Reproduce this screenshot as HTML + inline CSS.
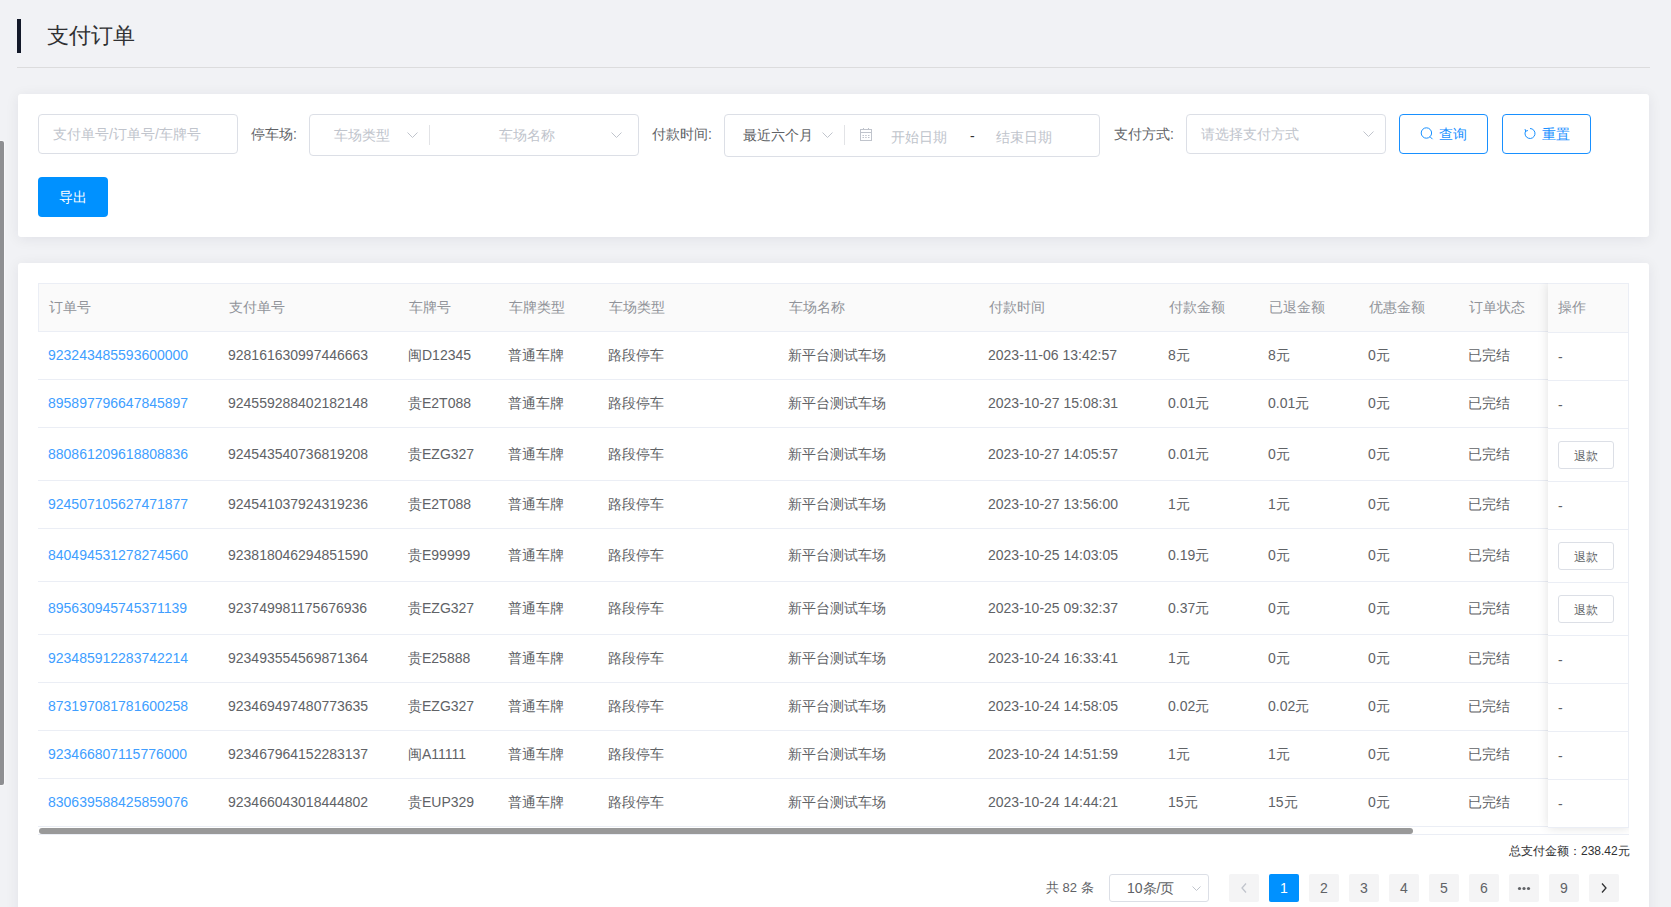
<!DOCTYPE html>
<html><head><meta charset="utf-8">
<style>
*{box-sizing:border-box;margin:0;padding:0}
html,body{width:1671px;height:907px;overflow:hidden}
body{background:#f1f2f5;font-family:"Liberation Sans",sans-serif;color:#606266;position:relative;font-size:14px}
.abs{position:absolute}
.vscroll{position:absolute;left:0;top:141px;width:4px;height:644px;background:#8e8f92;border-radius:0 2px 2px 0;box-shadow:0 0 1px 1px rgba(255,255,255,0.55)}
.tbar{position:absolute;left:17px;top:19px;width:4px;height:34px;background:#131929}
.title{position:absolute;left:47px;top:21px;font-size:22px;line-height:30px;color:#303133;white-space:nowrap}
.hr{position:absolute;left:17px;top:67px;width:1633px;height:1px;background:#dcdcdd}
.card{position:absolute;left:18px;width:1631px;background:#fff;border-radius:3px;box-shadow:0 2px 14px rgba(0,10,50,0.075)}
.inp{position:absolute;border:1px solid #dcdfe6;border-radius:4px;background:#fff}
.ph{position:absolute;color:#c0c4cc;white-space:nowrap;font-size:14px;line-height:20px}
.lbl{position:absolute;color:#606266;white-space:nowrap;font-size:14px;line-height:20px}
.chev{position:absolute;width:11px;height:6px}
.vdiv{position:absolute;width:1px;background:#e2e3e6}
.obtn{position:absolute;border:1px solid #1890ff;border-radius:4px;background:#fff;color:#1890ff;font-size:14px;line-height:20px}
.pbtn{position:absolute;background:#0091ff;border-radius:4px;color:#fff;font-size:14px;line-height:20px}
/* table */
.table{position:absolute;left:38px;top:283px;width:1591px;height:552px;overflow:hidden}
.thead{position:absolute;left:0;top:0;width:1591px;height:49px;background:#fafafa;border-top:1px solid #ebeef5;border-bottom:1px solid #ebeef5;border-left:1px solid #ebeef5}

.thead .c{position:absolute;top:0;height:47px;line-height:47px;padding-left:10px;color:#909399;white-space:nowrap}
.tbody{position:absolute;left:0;top:49px;width:1591px}
.row{position:absolute;left:0;width:1591px;border-bottom:1px solid #ebeef5;box-sizing:content-box}
.row .c{position:absolute;top:0;height:100%;display:flex;align-items:center;padding-left:10px;white-space:nowrap;color:#606266}
.row .c.link{color:#409eff}
.row .a{position:relative;top:-1px}
.row.tall .c{padding-top:2px}
.fixed{position:absolute;left:1510px;top:0;width:81px;height:545px;background:#fff;box-shadow:0 0 10px rgba(0,0,0,0.12)}
.fhead{position:absolute;left:0;top:0;width:81px;height:50px;background:#fafafa;border-top:1px solid #ebeef5;border-bottom:1px solid #ebeef5;border-right:1px solid #ebeef5;padding-left:10px;line-height:46px;color:#909399}
.fbody{position:absolute;left:0;top:50px;width:81px}
.frow{position:absolute;left:0;width:81px;border-bottom:1px solid #ebeef5;border-right:1px solid #ebeef5;box-sizing:border-box;display:flex;align-items:center;padding-left:10px}

.dash{color:#606266;font-size:14px}
.rbtn{display:inline-block;width:56px;height:28px;border:1px solid #dcdfe6;border-radius:3px;font-size:12px;line-height:26px;padding-top:1px;text-align:center;color:#606266;background:#fff}
.hscroll{position:absolute;left:1px;top:545px;width:1374px;height:6px;background:#999;border-radius:3px}
.tbot{position:absolute;left:0;top:551px;width:1591px;height:1px;background:#ebeef5}
/* pagination */
.pg{position:absolute;top:874px;width:30px;height:28px;background:#f4f4f5;border-radius:2px;font-size:14px;line-height:28px;text-align:center;color:#606266}
.pg.act{background:#0091ff;color:#fff}
</style></head><body>
<div class="vscroll"></div>
<div class="tbar"></div>
<div class="title">支付订单</div>
<div class="hr"></div>

<div class="card" style="top:94px;height:143px"></div>
<div class="card" style="top:263px;height:700px"></div>

<!-- filter row -->
<div class="inp" style="left:38px;top:114px;width:200px;height:40px"></div>
<div class="ph" style="left:53px;top:124px">支付单号/订单号/车牌号</div>

<div class="lbl" style="left:251px;top:124px">停车场:</div>
<div class="inp" style="left:309px;top:114px;width:330px;height:42px"></div>
<div class="ph" style="left:334px;top:125px">车场类型</div>
<svg class="chev" style="left:407px;top:132px" viewBox="0 0 11 6"><path d="M0.5 0.5 L5.5 5.5 L10.5 0.5" fill="none" stroke="#c0c4cc" stroke-width="1"/></svg>
<div class="vdiv" style="left:429px;top:125px;height:20px"></div>
<div class="ph" style="left:499px;top:125px">车场名称</div>
<svg class="chev" style="left:611px;top:132px" viewBox="0 0 11 6"><path d="M0.5 0.5 L5.5 5.5 L10.5 0.5" fill="none" stroke="#c0c4cc" stroke-width="1"/></svg>

<div class="lbl" style="left:652px;top:124px">付款时间:</div>
<div class="inp" style="left:724px;top:114px;width:376px;height:43px"></div>
<div class="lbl" style="left:743px;top:125px">最近六个月</div>
<svg class="chev" style="left:822px;top:132px" viewBox="0 0 11 6"><path d="M0.5 0.5 L5.5 5.5 L10.5 0.5" fill="none" stroke="#c0c4cc" stroke-width="1"/></svg>
<div class="vdiv" style="left:844px;top:125px;height:20px"></div>
<svg class="abs" style="left:859px;top:127px" width="14" height="15" viewBox="0 0 14 15"><rect x="1.5" y="2.5" width="11" height="11" fill="none" stroke="#c0c4cc" stroke-width="1"/><line x1="1.5" y1="5.5" x2="12.5" y2="5.5" stroke="#c0c4cc"/><line x1="4.5" y1="1" x2="4.5" y2="3" stroke="#c0c4cc"/><line x1="9.5" y1="1" x2="9.5" y2="3" stroke="#c0c4cc"/><path d="M3.5 8.5h1.5M6.2 8.5h1.5M9 8.5h1.5M3.5 10.5h1.5M6.2 10.5h1.5M9 10.5h1.5" stroke="#c0c4cc" stroke-width="1"/></svg>
<div class="ph" style="left:891px;top:127px">开始日期</div>
<div class="lbl" style="left:970px;top:126px;color:#303133">-</div>
<div class="ph" style="left:996px;top:127px">结束日期</div>

<div class="lbl" style="left:1114px;top:124px">支付方式:</div>
<div class="inp" style="left:1186px;top:114px;width:200px;height:40px"></div>
<div class="ph" style="left:1201px;top:124px">请选择支付方式</div>
<svg class="chev" style="left:1363px;top:131px" viewBox="0 0 11 6"><path d="M0.5 0.5 L5.5 5.5 L10.5 0.5" fill="none" stroke="#c0c4cc" stroke-width="1"/></svg>

<div class="obtn" style="left:1399px;top:114px;width:89px;height:40px"></div>
<svg class="abs" style="left:1420px;top:127px" width="14" height="14" viewBox="0 0 14 14"><circle cx="6.4" cy="6" r="5.2" fill="none" stroke="#1890ff" stroke-width="1"/><line x1="10" y1="9.7" x2="12.5" y2="12.2" stroke="#1890ff" stroke-width="1"/></svg>
<div class="abs" style="left:1439px;top:124px;color:#1890ff;line-height:20px">查询</div>
<div class="obtn" style="left:1502px;top:114px;width:89px;height:40px"></div>
<svg class="abs" style="left:1524px;top:127px" width="13" height="13" viewBox="0 0 13 13"><path d="M6 1.5 A5 5 0 1 1 1.67 4" fill="none" stroke="#1890ff" stroke-width="1"/><path d="M1 2.1 L1.67 4.2 L3.9 3.5" fill="none" stroke="#1890ff" stroke-width="1"/></svg>
<div class="abs" style="left:1542px;top:124px;color:#1890ff;line-height:20px">重置</div>

<div class="pbtn" style="left:38px;top:177px;width:70px;height:40px"></div>
<div class="abs" style="left:59px;top:187px;color:#fff;line-height:20px">导出</div>

<!-- table -->
<div class="table">
  
  <div class="thead"><div class="c" style="left:0px;width:180px">订单号</div><div class="c" style="left:180px;width:180px">支付单号</div><div class="c" style="left:360px;width:100px">车牌号</div><div class="c" style="left:460px;width:100px">车牌类型</div><div class="c" style="left:560px;width:180px">车场类型</div><div class="c" style="left:740px;width:200px">车场名称</div><div class="c" style="left:940px;width:180px">付款时间</div><div class="c" style="left:1120px;width:100px">付款金额</div><div class="c" style="left:1220px;width:100px">已退金额</div><div class="c" style="left:1320px;width:100px">优惠金额</div><div class="c" style="left:1420px;width:100px">订单状态</div></div>
  <div class="tbody">
<div class="row" style="top:0px;height:47px"><div class="c link" style="left:0px;width:180px"><span class="a">923243485593600000</span></div><div class="c" style="left:180px;width:180px"><span class="a">928161630997446663</span></div><div class="c" style="left:360px;width:100px">闽<span class="a">D12345</span></div><div class="c" style="left:460px;width:100px">普通车牌</div><div class="c" style="left:560px;width:180px">路段停车</div><div class="c" style="left:740px;width:200px">新平台测试车场</div><div class="c" style="left:940px;width:180px"><span class="a">2023-11-06 13:42:57</span></div><div class="c" style="left:1120px;width:100px"><span class="a">8</span>元</div><div class="c" style="left:1220px;width:100px"><span class="a">8</span>元</div><div class="c" style="left:1320px;width:100px"><span class="a">0</span>元</div><div class="c" style="left:1420px;width:100px">已完结</div></div>
<div class="row" style="top:48px;height:47px"><div class="c link" style="left:0px;width:180px"><span class="a">895897796647845897</span></div><div class="c" style="left:180px;width:180px"><span class="a">924559288402182148</span></div><div class="c" style="left:360px;width:100px">贵<span class="a">E2T088</span></div><div class="c" style="left:460px;width:100px">普通车牌</div><div class="c" style="left:560px;width:180px">路段停车</div><div class="c" style="left:740px;width:200px">新平台测试车场</div><div class="c" style="left:940px;width:180px"><span class="a">2023-10-27 15:08:31</span></div><div class="c" style="left:1120px;width:100px"><span class="a">0.01</span>元</div><div class="c" style="left:1220px;width:100px"><span class="a">0.01</span>元</div><div class="c" style="left:1320px;width:100px"><span class="a">0</span>元</div><div class="c" style="left:1420px;width:100px">已完结</div></div>
<div class="row tall" style="top:96px;height:52px"><div class="c link" style="left:0px;width:180px"><span class="a">880861209618808836</span></div><div class="c" style="left:180px;width:180px"><span class="a">924543540736819208</span></div><div class="c" style="left:360px;width:100px">贵<span class="a">EZG327</span></div><div class="c" style="left:460px;width:100px">普通车牌</div><div class="c" style="left:560px;width:180px">路段停车</div><div class="c" style="left:740px;width:200px">新平台测试车场</div><div class="c" style="left:940px;width:180px"><span class="a">2023-10-27 14:05:57</span></div><div class="c" style="left:1120px;width:100px"><span class="a">0.01</span>元</div><div class="c" style="left:1220px;width:100px"><span class="a">0</span>元</div><div class="c" style="left:1320px;width:100px"><span class="a">0</span>元</div><div class="c" style="left:1420px;width:100px">已完结</div></div>
<div class="row" style="top:149px;height:47px"><div class="c link" style="left:0px;width:180px"><span class="a">924507105627471877</span></div><div class="c" style="left:180px;width:180px"><span class="a">924541037924319236</span></div><div class="c" style="left:360px;width:100px">贵<span class="a">E2T088</span></div><div class="c" style="left:460px;width:100px">普通车牌</div><div class="c" style="left:560px;width:180px">路段停车</div><div class="c" style="left:740px;width:200px">新平台测试车场</div><div class="c" style="left:940px;width:180px"><span class="a">2023-10-27 13:56:00</span></div><div class="c" style="left:1120px;width:100px"><span class="a">1</span>元</div><div class="c" style="left:1220px;width:100px"><span class="a">1</span>元</div><div class="c" style="left:1320px;width:100px"><span class="a">0</span>元</div><div class="c" style="left:1420px;width:100px">已完结</div></div>
<div class="row tall" style="top:197px;height:52px"><div class="c link" style="left:0px;width:180px"><span class="a">840494531278274560</span></div><div class="c" style="left:180px;width:180px"><span class="a">923818046294851590</span></div><div class="c" style="left:360px;width:100px">贵<span class="a">E99999</span></div><div class="c" style="left:460px;width:100px">普通车牌</div><div class="c" style="left:560px;width:180px">路段停车</div><div class="c" style="left:740px;width:200px">新平台测试车场</div><div class="c" style="left:940px;width:180px"><span class="a">2023-10-25 14:03:05</span></div><div class="c" style="left:1120px;width:100px"><span class="a">0.19</span>元</div><div class="c" style="left:1220px;width:100px"><span class="a">0</span>元</div><div class="c" style="left:1320px;width:100px"><span class="a">0</span>元</div><div class="c" style="left:1420px;width:100px">已完结</div></div>
<div class="row tall" style="top:250px;height:52px"><div class="c link" style="left:0px;width:180px"><span class="a">895630945745371139</span></div><div class="c" style="left:180px;width:180px"><span class="a">923749981175676936</span></div><div class="c" style="left:360px;width:100px">贵<span class="a">EZG327</span></div><div class="c" style="left:460px;width:100px">普通车牌</div><div class="c" style="left:560px;width:180px">路段停车</div><div class="c" style="left:740px;width:200px">新平台测试车场</div><div class="c" style="left:940px;width:180px"><span class="a">2023-10-25 09:32:37</span></div><div class="c" style="left:1120px;width:100px"><span class="a">0.37</span>元</div><div class="c" style="left:1220px;width:100px"><span class="a">0</span>元</div><div class="c" style="left:1320px;width:100px"><span class="a">0</span>元</div><div class="c" style="left:1420px;width:100px">已完结</div></div>
<div class="row" style="top:303px;height:47px"><div class="c link" style="left:0px;width:180px"><span class="a">923485912283742214</span></div><div class="c" style="left:180px;width:180px"><span class="a">923493554569871364</span></div><div class="c" style="left:360px;width:100px">贵<span class="a">E25888</span></div><div class="c" style="left:460px;width:100px">普通车牌</div><div class="c" style="left:560px;width:180px">路段停车</div><div class="c" style="left:740px;width:200px">新平台测试车场</div><div class="c" style="left:940px;width:180px"><span class="a">2023-10-24 16:33:41</span></div><div class="c" style="left:1120px;width:100px"><span class="a">1</span>元</div><div class="c" style="left:1220px;width:100px"><span class="a">0</span>元</div><div class="c" style="left:1320px;width:100px"><span class="a">0</span>元</div><div class="c" style="left:1420px;width:100px">已完结</div></div>
<div class="row" style="top:351px;height:47px"><div class="c link" style="left:0px;width:180px"><span class="a">873197081781600258</span></div><div class="c" style="left:180px;width:180px"><span class="a">923469497480773635</span></div><div class="c" style="left:360px;width:100px">贵<span class="a">EZG327</span></div><div class="c" style="left:460px;width:100px">普通车牌</div><div class="c" style="left:560px;width:180px">路段停车</div><div class="c" style="left:740px;width:200px">新平台测试车场</div><div class="c" style="left:940px;width:180px"><span class="a">2023-10-24 14:58:05</span></div><div class="c" style="left:1120px;width:100px"><span class="a">0.02</span>元</div><div class="c" style="left:1220px;width:100px"><span class="a">0.02</span>元</div><div class="c" style="left:1320px;width:100px"><span class="a">0</span>元</div><div class="c" style="left:1420px;width:100px">已完结</div></div>
<div class="row" style="top:399px;height:47px"><div class="c link" style="left:0px;width:180px"><span class="a">923466807115776000</span></div><div class="c" style="left:180px;width:180px"><span class="a">923467964152283137</span></div><div class="c" style="left:360px;width:100px">闽<span class="a">A11111</span></div><div class="c" style="left:460px;width:100px">普通车牌</div><div class="c" style="left:560px;width:180px">路段停车</div><div class="c" style="left:740px;width:200px">新平台测试车场</div><div class="c" style="left:940px;width:180px"><span class="a">2023-10-24 14:51:59</span></div><div class="c" style="left:1120px;width:100px"><span class="a">1</span>元</div><div class="c" style="left:1220px;width:100px"><span class="a">1</span>元</div><div class="c" style="left:1320px;width:100px"><span class="a">0</span>元</div><div class="c" style="left:1420px;width:100px">已完结</div></div>
<div class="row" style="top:447px;height:47px"><div class="c link" style="left:0px;width:180px"><span class="a">830639588425859076</span></div><div class="c" style="left:180px;width:180px"><span class="a">923466043018444802</span></div><div class="c" style="left:360px;width:100px">贵<span class="a">EUP329</span></div><div class="c" style="left:460px;width:100px">普通车牌</div><div class="c" style="left:560px;width:180px">路段停车</div><div class="c" style="left:740px;width:200px">新平台测试车场</div><div class="c" style="left:940px;width:180px"><span class="a">2023-10-24 14:44:21</span></div><div class="c" style="left:1120px;width:100px"><span class="a">15</span>元</div><div class="c" style="left:1220px;width:100px"><span class="a">15</span>元</div><div class="c" style="left:1320px;width:100px"><span class="a">0</span>元</div><div class="c" style="left:1420px;width:100px">已完结</div></div>
  </div>
  <div class="fixed">
    <div class="fhead">操作</div>
    <div class="fbody">
<div class="frow" style="top:0px;height:48px"><span class="dash">-</span></div>
<div class="frow" style="top:48px;height:48px"><span class="dash">-</span></div>
<div class="frow" style="top:96px;height:53px"><span class="rbtn">退款</span></div>
<div class="frow" style="top:149px;height:48px"><span class="dash">-</span></div>
<div class="frow" style="top:197px;height:53px"><span class="rbtn">退款</span></div>
<div class="frow" style="top:250px;height:53px"><span class="rbtn">退款</span></div>
<div class="frow" style="top:303px;height:48px"><span class="dash">-</span></div>
<div class="frow" style="top:351px;height:48px"><span class="dash">-</span></div>
<div class="frow" style="top:399px;height:48px"><span class="dash">-</span></div>
<div class="frow" style="top:447px;height:48px"><span class="dash">-</span></div>
    </div>
  </div>
  <div class="hscroll"></div>
  <div class="tbot"></div>
</div>

<div class="abs" style="left:1509px;top:843px;font-size:12px;line-height:16px;color:#303133;white-space:nowrap">总支付金额：238.42元</div>

<div class="abs" style="left:1046px;top:879px;font-size:13px;line-height:18px;color:#606266;white-space:nowrap">共 82 条</div>
<div class="inp" style="left:1109px;top:874px;width:100px;height:28px;border-radius:3px"></div>
<div class="abs" style="left:1127px;top:879px;font-size:14px;line-height:18px;color:#606266;white-space:nowrap">10条/页</div>
<svg class="abs" style="left:1192px;top:886px" width="9" height="5" viewBox="0 0 9 5"><path d="M0.5 0.5 L4.5 4.5 L8.5 0.5" fill="none" stroke="#c0c4cc" stroke-width="1"/></svg>

<div class="pg" style="left:1229px"><svg width="30" height="28" viewBox="0 0 30 28" style="display:block"><path d="M17 9.5 L13 14 L17 18.5" fill="none" stroke="#c0c4cc" stroke-width="1.3"/></svg></div>
<div class="pg act" style="left:1269px">1</div>
<div class="pg" style="left:1309px">2</div>
<div class="pg" style="left:1349px">3</div>
<div class="pg" style="left:1389px">4</div>
<div class="pg" style="left:1429px">5</div>
<div class="pg" style="left:1469px">6</div>
<div class="pg" style="left:1509px"><svg width="30" height="28" viewBox="0 0 30 28" style="display:block"><circle cx="10.5" cy="14.5" r="1.6" fill="#606266"/><circle cx="15" cy="14.5" r="1.6" fill="#606266"/><circle cx="19.5" cy="14.5" r="1.6" fill="#606266"/></svg></div>
<div class="pg" style="left:1549px">9</div>
<div class="pg" style="left:1589px"><svg width="30" height="28" viewBox="0 0 30 28" style="display:block"><path d="M13 9.5 L17 14 L13 18.5" fill="none" stroke="#303133" stroke-width="1.3"/></svg></div>
</body></html>
